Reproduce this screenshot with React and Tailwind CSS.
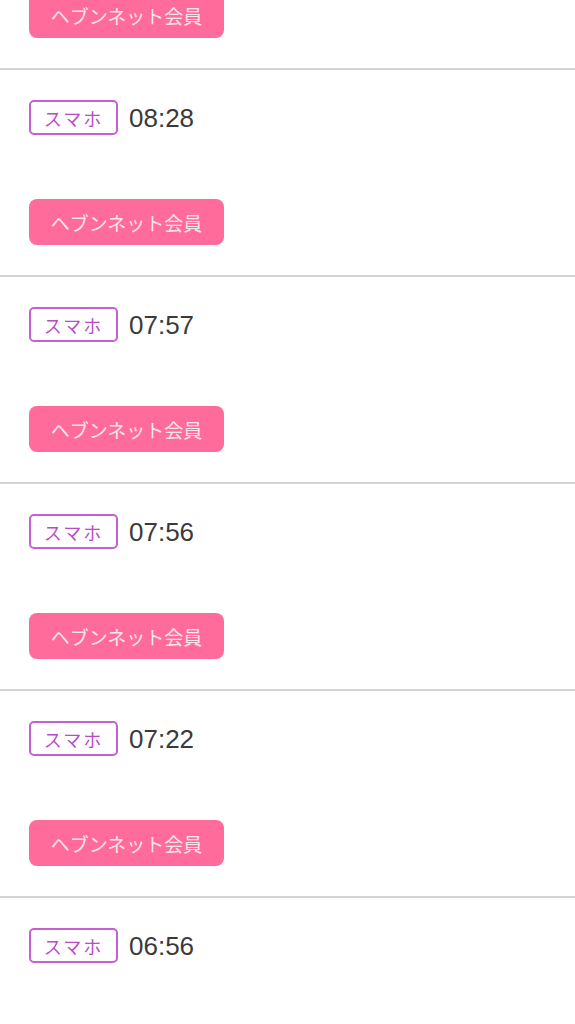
const entries = ['09:01', '08:28', '07:57', '07:56', '07:22', '06:56'];

function Entry({ time }) {
  return (
    <div className="border-b-2 border-[#d4d4d4] px-[29px] pt-[30px] pb-[30px]">
      <div className="flex items-center gap-[11px] h-[35px]">
        <span className="flex items-center justify-center h-[35px] w-[89px] border-2 border-[#c65fd3] rounded-[5px] text-[18px] leading-none text-[#b94cc6] tracking-[2px]">
          スマホ
        </span>
        <span
          className="text-[26px] text-[#3a3a3a] leading-none"
          style={{ fontFamily: '"Liberation Sans", Arial, sans-serif' }}
        >
          {time}
        </span>
      </div>
      <div className="mt-[64px]">
        <button className="h-[46px] w-[195px] rounded-[8px] bg-[#ff6b9b] text-[19px] text-[#fde3ec] leading-none">
          ヘブンネット会員
        </button>
      </div>
    </div>
  );
}

export default function App() {
  return (
    <div
      className="w-[575px] h-[1024px] overflow-hidden bg-white"
      style={{ fontFamily: '"Noto Sans CJK JP", "Liberation Sans", sans-serif' }}
    >
      <div className="mt-[-137px]">
        {entries.map((t) => (
          <Entry key={t} time={t} />
        ))}
      </div>
    </div>
  );
}
